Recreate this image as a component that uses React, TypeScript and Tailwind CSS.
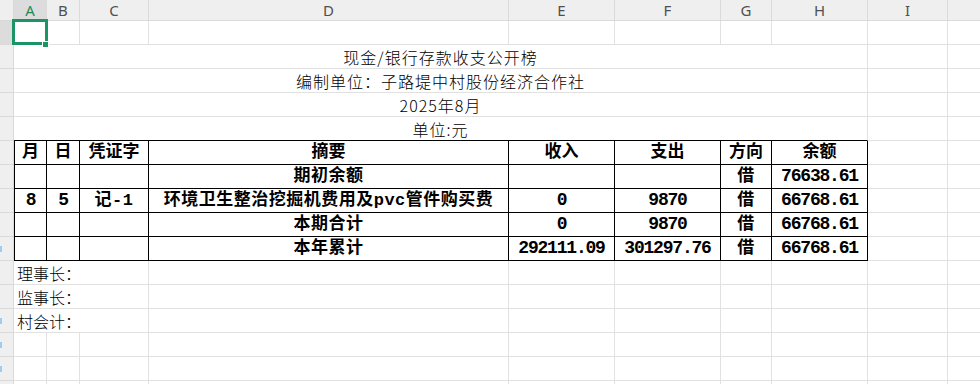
const colLetters = ["A", "B", "C", "D", "E", "F", "G", "H", "I", ""];

type Kind = "title" | "th" | "td" | "num" | "foot" | "plain";

interface Cell {
  text?: string;
  span?: number;
  kind?: Kind;
  box?: boolean; // black table border
  first?: boolean; // leftmost table cell
  under?: boolean; // black bottom border only
}

const mono = "font-['Liberation_Mono','Noto_Sans_CJK_SC',monospace]";
const cjk = "font-['Noto_Sans_CJK_SC','Noto_Sans',sans-serif]";

const spanClass: Record<number, string> = {
  1: "col-span-1",
  3: "col-span-3",
  8: "col-span-8",
};

const kindClass: Record<Kind, string> = {
  title: `${cjk} justify-center text-[16px] tracking-[1px] font-light text-black`,
  th: `${mono} justify-center text-[17px] font-bold text-black`,
  td: `${mono} justify-center text-[17px] font-bold tracking-[0.5px] text-black`,
  num: `${mono} justify-center text-[18px] tracking-[-1.2px] font-bold text-black`,
  foot: `${cjk} justify-start pl-[3px] text-[16px] font-light text-black`,
  plain: "",
};

const blank = (n: number): Cell[] => Array.from({ length: n }, () => ({}));

const tableRow = (vals: [string, Kind][]): Cell[] => [
  ...vals.map(([text, kind], i) => ({ text, kind, box: true, first: i === 0 })),
  ...blank(2),
];

const rows: { cells: Cell[]; mark?: boolean; active?: boolean }[] = [
  { cells: blank(10), active: true },
  { cells: [{ text: "现金/银行存款收支公开榜", span: 8, kind: "title" }, ...blank(2)] },
  { cells: [{ text: "编制单位：子路堤中村股份经济合作社", span: 8, kind: "title" }, ...blank(2)] },
  { cells: [{ text: "2025年8月", span: 8, kind: "title" }, ...blank(2)] },
  { cells: [{ text: "单位:元", span: 8, kind: "title", under: true }, ...blank(2)] },
  {
    cells: tableRow([
      ["月", "th"],
      ["日", "th"],
      ["凭证字", "th"],
      ["摘要", "th"],
      ["收入", "th"],
      ["支出", "th"],
      ["方向", "th"],
      ["余额", "th"],
    ]),
  },
  {
    cells: tableRow([
      ["", "td"],
      ["", "td"],
      ["", "td"],
      ["期初余额", "td"],
      ["", "num"],
      ["", "num"],
      ["借", "td"],
      ["76638.61", "num"],
    ]),
  },
  {
    cells: tableRow([
      ["8", "num"],
      ["5", "num"],
      ["记-1", "td"],
      ["环境卫生整治挖掘机费用及pvc管件购买费", "td"],
      ["0", "num"],
      ["9870", "num"],
      ["借", "td"],
      ["66768.61", "num"],
    ]),
  },
  {
    cells: tableRow([
      ["", "td"],
      ["", "td"],
      ["", "td"],
      ["本期合计", "td"],
      ["0", "num"],
      ["9870", "num"],
      ["借", "td"],
      ["66768.61", "num"],
    ]),
  },
  {
    mark: true,
    cells: tableRow([
      ["", "td"],
      ["", "td"],
      ["", "td"],
      ["本年累计", "td"],
      ["292111.09", "num"],
      ["301297.76", "num"],
      ["借", "td"],
      ["66768.61", "num"],
    ]),
  },
  { cells: [{ text: "理事长：", span: 3, kind: "foot" }, ...blank(7)] },
  { cells: [{ text: "监事长：", span: 3, kind: "foot" }, ...blank(7)] },
  { mark: true, cells: [{ text: "村会计：", span: 3, kind: "foot" }, ...blank(7)] },
  { mark: true, cells: blank(10) },
  { mark: true, cells: blank(10) },
  { cells: blank(10) },
];

function GridCell({ cell }: { cell: Cell }) {
  const border = cell.box
    ? "border-r border-b border-black"
    : cell.under
      ? "border-r border-b border-r-[#e1e1e1] border-b-black"
      : "border-r border-b border-[#e1e1e1]";
  return (
    <div
      className={`h-[24px] flex items-center overflow-hidden whitespace-nowrap ${border} ${
        cell.first ? "border-l border-l-black" : ""
      } ${spanClass[cell.span ?? 1]} ${kindClass[cell.kind ?? "plain"]}`}
    >
      {cell.text}
    </div>
  );
}

export default function App() {
  return (
    <div className="relative w-[980px] h-[384px] overflow-hidden bg-white">
      <div className="grid grid-cols-[14px_33px_33px_69px_360px_106px_106px_51px_96px_80px_64px] w-[1012px]">
        {/* column headers */}
        <div className="h-[21px] bg-[#efefef] border-r border-b border-[#d8d8d8]" />
        {colLetters.map((l, i) => (
          <div
            key={i}
            className={`h-[21px] flex items-center justify-center border-r border-b border-[#dadada] font-['Noto_Sans',sans-serif] text-[15px] ${
              i === 0 ? "bg-[#dcdcdc] text-[#1e8a5c]" : "bg-[#efefef] text-[#4f4f4f]"
            }`}
          >
            {l}
          </div>
        ))}

        {rows.map((row, r) => (
          <div key={r} className="contents">
            <div
              className={`h-[24px] flex items-center border-r border-b border-[#dadada] ${
                row.active ? "bg-[#dcdcdc]" : "bg-[#efefef]"
              }`}
            >
              {row.mark && <span className="w-[2px] h-[6px] bg-[#9fcdf2]" />}
            </div>
            {row.cells.map((c, i) => (
              <GridCell key={i} cell={c} />
            ))}
          </div>
        ))}
      </div>

      {/* active cell A1 */}
      <div className="absolute left-[12px] top-[19px] w-[36px] h-[26px] border-[3px] border-[#1b9466]" />
      <div className="absolute left-[42px] top-[41px] w-[7px] h-[7px] bg-[#1b9466] border border-white" />
    </div>
  );
}
